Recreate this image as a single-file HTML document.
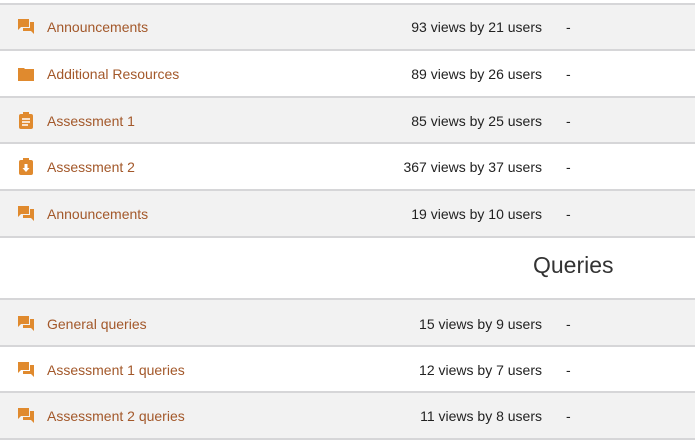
<!DOCTYPE html>
<html><head><style>
body{margin:0;width:695px;height:440px;background:#fff;font-family:"Liberation Sans",sans-serif;overflow:hidden;position:relative}
.r{position:absolute;left:0;width:695px;border-top:2px solid #d6d6d8;box-sizing:border-box}
.g{background:#f2f2f2}
.n{position:absolute;left:47px;color:#a3582a;font-size:14px}
.v{position:absolute;right:153px;color:#222;font-size:14px}
.d{position:absolute;left:566px;color:#222;font-size:14px}
svg{position:absolute;left:18px}
</style></head><body>
<div class="r g" style="top:3px;height:47px"></div>
<div class="r" style="top:49px;height:48px"></div>
<div class="r g" style="top:96px;height:47px"></div>
<div class="r" style="top:142px;height:48px"></div>
<div class="r g" style="top:189px;height:48px"></div>
<div class="r" style="top:236px;height:63px"></div>
<div class="r g" style="top:298px;height:48px"></div>
<div class="r" style="top:345px;height:47px"></div>
<div class="r g" style="top:391px;height:49px;border-bottom:2px solid #d6d6d8"></div>

<svg style="top:19px" width="17" height="16" viewBox="0 0 17 16"><path d="M0 0h11v8H3l-3 3z" fill="#e08a2e"/><path d="M12 3h4v12l-3-3H5V9h7z" fill="#e08a2e"/></svg>
<div class="n" style="top:19px">Announcements</div><div class="v" style="top:19px">93 views by 21 users</div><div class="d" style="top:19px">-</div>

<svg style="top:66px" width="17" height="15" viewBox="0 0 17 15"><path d="M0 2h6l1 1h9v12H0z" fill="#e08a2e"/></svg>
<div class="n" style="top:66px">Additional Resources</div><div class="v" style="top:66px">89 views by 26 users</div><div class="d" style="top:66px">-</div>

<svg style="top:112px" width="16" height="17" viewBox="0 0 16 17"><rect x="1" y="2" width="14" height="15" rx="2" fill="#e08a2e"/><rect x="5" y="0" width="6" height="4" fill="#e08a2e"/><path d="M4 7h8M4 10h8M4 13h6" stroke="#fff" stroke-width="1.4"/></svg>
<div class="n" style="top:113px">Assessment 1</div><div class="v" style="top:113px">85 views by 25 users</div><div class="d" style="top:113px">-</div>

<svg style="top:158px" width="16" height="17" viewBox="0 0 16 17"><rect x="1" y="2" width="14" height="15" rx="2" fill="#e08a2e"/><rect x="5" y="0" width="6" height="4" fill="#e08a2e"/><path d="M6.5 6h3v4h2L8 14 4.5 10h2z" fill="#fff"/></svg>
<div class="n" style="top:159px">Assessment 2</div><div class="v" style="top:159px">367 views by 37 users</div><div class="d" style="top:159px">-</div>

<svg style="top:206px" width="17" height="16" viewBox="0 0 17 16"><path d="M0 0h11v8H3l-3 3z" fill="#e08a2e"/><path d="M12 3h4v12l-3-3H5V9h7z" fill="#e08a2e"/></svg>
<div class="n" style="top:206px">Announcements</div><div class="v" style="top:206px">19 views by 10 users</div><div class="d" style="top:206px">-</div>

<div style="position:absolute;left:533px;top:252px;font-size:23px;color:#333;font-weight:300">Queries</div>

<svg style="top:316px" width="17" height="16" viewBox="0 0 17 16"><path d="M0 0h11v8H3l-3 3z" fill="#e08a2e"/><path d="M12 3h4v12l-3-3H5V9h7z" fill="#e08a2e"/></svg>
<div class="n" style="top:316px">General queries</div><div class="v" style="top:316px">15 views by 9 users</div><div class="d" style="top:316px">-</div>

<svg style="top:362px" width="17" height="16" viewBox="0 0 17 16"><path d="M0 0h11v8H3l-3 3z" fill="#e08a2e"/><path d="M12 3h4v12l-3-3H5V9h7z" fill="#e08a2e"/></svg>
<div class="n" style="top:362px">Assessment 1 queries</div><div class="v" style="top:362px">12 views by 7 users</div><div class="d" style="top:362px">-</div>

<svg style="top:408px" width="17" height="16" viewBox="0 0 17 16"><path d="M0 0h11v8H3l-3 3z" fill="#e08a2e"/><path d="M12 3h4v12l-3-3H5V9h7z" fill="#e08a2e"/></svg>
<div class="n" style="top:408px">Assessment 2 queries</div><div class="v" style="top:408px">11 views by 8 users</div><div class="d" style="top:408px">-</div>
</body></html>
